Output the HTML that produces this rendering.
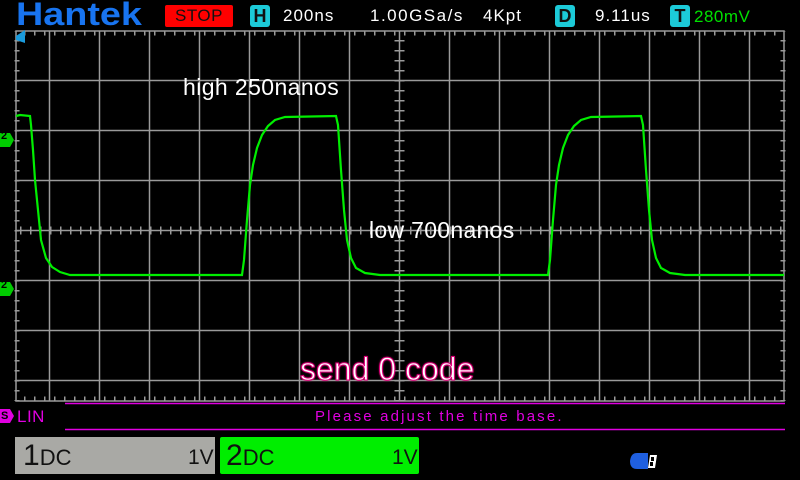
<!DOCTYPE html>
<html><head><meta charset="utf-8"><style>
body{margin:0;background:#000;width:800px;height:480px;overflow:hidden;position:relative;font-family:"Liberation Sans",sans-serif}
.a{position:absolute;white-space:nowrap}
</style></head><body>
<svg width="800" height="480" style="position:absolute;left:0;top:0">
<g stroke="#9a9a9a" stroke-width="1.5" fill="none">
<rect x="16" y="31" width="768" height="370"/>
<path d="M49.5 31V401M99.5 31V401M149.5 31V401M199.5 31V401M249.5 31V401M299.5 31V401M349.5 31V401M399.5 31V401M449.5 31V401M499.5 31V401M549.5 31V401M599.5 31V401M649.5 31V401M699.5 31V401M749.5 31V401"/>
<path d="M16 80.5H784M16 130.5H784M16 180.5H784M16 230.5H784M16 280.5H784M16 330.5H784M16 380.5H784"/>
<path d="M16 230.5H784" stroke-width="8" stroke-dasharray="1.5 8.5" stroke-dashoffset="-4"/>
<path d="M399.5 31V401" stroke-width="10" stroke-dasharray="1.5 8.5" stroke-dashoffset="-9"/>
<path d="M16 33H784" stroke-width="5" stroke-dasharray="1.5 8.5" stroke-dashoffset="-8"/>
<path d="M16 399H784" stroke-width="5" stroke-dasharray="1.5 8.5" stroke-dashoffset="-8"/>
<path d="M17 31V401" stroke-width="5" stroke-dasharray="1.5 8.5" stroke-dashoffset="-9"/>
<path d="M783 31V401" stroke-width="5" stroke-dasharray="1.5 8.5" stroke-dashoffset="-9"/>
</g>
<path d="M16 116L20 115L30 116L31 125L33 150L35 180L38 210L41 240L46 258L52 267L60 272L70 275L242 275L244 260L247 220L250 185L253 165L257 148L262 135L268 126L275 120L285 117L336 116L338 125L341 170L344 210L347 240L351 258L356 268L365 273L380 275L548 275L550 260L553 220L556 185L559 165L563 148L568 135L574 126L581 120L591 117L641 116L643 125L646 170L649 210L652 240L656 258L661 268L670 273L685 275L784 275" fill="none" stroke="#00ee00" stroke-width="2.2"/>
<polygon points="16,36 25,30 25,43 16,40" fill="#1a9bdc"/>
<polygon points="0,133 10,133 14,140 10,147 0,147" fill="#00cc00"/>
<polygon points="0,282 10,282 14,289 10,296 0,296" fill="#00cc00"/>
<line x1="65" y1="403.5" x2="785" y2="403.5" stroke="#e000e0" stroke-width="1.5"/>
<line x1="65" y1="429.5" x2="785" y2="429.5" stroke="#e000e0" stroke-width="1.5"/>
<polygon points="0,409 10,409 14,416 10,423 0,423" fill="#e000e0"/>
<path d="M637 453H648V469H637Q630 469 630 461Q631 453 637 453Z" fill="#1f5fe0"/>
<polygon points="650,455 657,455 655,468 648,468" fill="#fff"/>
<rect x="651" y="457" width="3" height="4" fill="#000"/>
<rect x="650" y="462" width="3" height="4" fill="#000"/>
</svg>
<div class="a" style="left:16px;top:-4px;font-size:32px;font-weight:bold;color:#1874f0;transform:scaleX(1.18);transform-origin:left top">Hantek</div>
<div class="a" style="left:165px;top:5px;width:68px;height:22px;background:#f00;border-radius:2px;color:#111;font-size:17px;text-align:center;line-height:22px;letter-spacing:0.5px">STOP</div>
<div class="a" style="left:250px;top:5px;width:20px;height:22px;background:#1ccad8;border-radius:3px;color:#111;font-size:18px;font-weight:bold;text-align:center;line-height:22px">H</div>
<div class="a" style="left:283px;top:6px;font-size:17px;color:#fff;letter-spacing:1px">200ns</div>
<div class="a" style="left:370px;top:6px;font-size:17px;color:#fff;letter-spacing:1.5px">1.00GSa/s</div>
<div class="a" style="left:483px;top:6px;font-size:17px;color:#fff;letter-spacing:1px">4Kpt</div>
<div class="a" style="left:555px;top:5px;width:20px;height:22px;background:#1ccad8;border-radius:3px;color:#111;font-size:18px;font-weight:bold;text-align:center;line-height:22px">D</div>
<div class="a" style="left:595px;top:6px;font-size:17px;color:#fff;letter-spacing:1px">9.11us</div>
<div class="a" style="left:670px;top:5px;width:20px;height:22px;background:#1ccad8;border-radius:3px;color:#111;font-size:18px;font-weight:bold;text-align:center;line-height:22px">T</div>
<div class="a" style="left:694px;top:7px;font-size:17px;color:#00e000;letter-spacing:0.5px">280mV</div>
<div class="a" style="left:1px;top:130px;font-size:11px;font-weight:bold;color:#000">2</div>
<div class="a" style="left:1px;top:279px;font-size:11px;font-weight:bold;color:#000">2</div>
<div class="a" style="left:183px;top:74px;font-size:23px;color:#fff;letter-spacing:0.4px">high 250nanos</div>
<div class="a" style="left:369px;top:217px;font-size:23px;color:#fff;letter-spacing:0.3px">low 700nanos</div>
<div class="a" style="left:300px;top:351px;font-size:32px;color:#fff;-webkit-text-stroke:1px #e0007a;text-shadow:0 0 2px #e0007a">send 0 code</div>
<div class="a" style="left:1px;top:410px;font-size:11px;font-weight:bold;color:#000">S</div>
<div class="a" style="left:17px;top:407px;font-size:17px;color:#e000e0;letter-spacing:0.5px">LIN</div>
<div class="a" style="left:315px;top:408px;font-size:15px;color:#e000e0;letter-spacing:2.15px">Please adjust the time base.</div>
<div class="a" style="left:15px;top:437px;width:200px;height:37px;background:#a9a9a5"></div>
<div class="a" style="left:23px;top:439px;font-size:30px;color:#111">1<span style="font-size:22px">DC</span></div>
<div class="a" style="left:188px;top:446px;font-size:21px;color:#111">1V</div>
<div class="a" style="left:220px;top:437px;width:199px;height:37px;background:#00ee00;border-radius:2px"></div>
<div class="a" style="left:226px;top:439px;font-size:30px;color:#111">2<span style="font-size:22px">DC</span></div>
<div class="a" style="left:392px;top:446px;font-size:21px;color:#111">1V</div>
</body></html>
